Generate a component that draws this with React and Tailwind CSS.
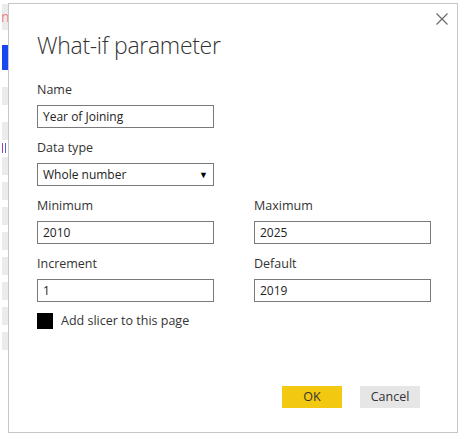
import React from "react";

const font = { fontFamily: '"Open Sans", "Noto Sans", sans-serif' };

function Field({ label, value }) {
  return (
    <div className="flex flex-col">
      <label className="h-[20px] leading-[20px] text-[12.5px] text-[#333]">{label}</label>
      <div className="mt-[5px] h-[23px] border border-[#7a7a7a] px-[5px] flex items-center text-[12px] text-[#222]">
        {value}
      </div>
    </div>
  );
}

export default function App() {
  return (
    <div className="w-[465px] h-[439px] bg-white flex overflow-hidden" style={font}>
      {/* background page strip */}
      <div className="w-[8px] pl-[2px] flex flex-col">
        <div className="mt-[4px] h-[26px] bg-[#ebebeb] flex items-center text-[#f08080] text-[14px] leading-none overflow-hidden">
          <span className="ml-[-1px]">n</span>
        </div>
        <div className="mt-[15px] h-[25px] bg-[#1a48f0]" />
        <div className="mt-[17px] h-[18px] bg-[#ebebeb]" />
        <div className="mt-[17px] h-[18px] bg-[#ebebeb]" />
        <div className="mt-[3px] h-[10px] flex gap-[2px]">
          <div className="w-[1px] bg-[#a03ca0]" />
          <div className="w-[1px] bg-[#4a6ad0]" />
        </div>
        <div className="mt-[4px] h-[18px] bg-[#ebebeb]" />
        {[0, 1, 2, 3, 4, 5, 6].map((i) => (
          <div key={i} className="mt-[7px] h-[18px] bg-[#ebebeb]" />
        ))}
      </div>

      {/* dialog */}
      <div className="mt-[3px] w-[450px] h-[430px] border border-[#c6c6c6] bg-white flex flex-col pl-[28px] pr-[26px] pt-[25px]">
        <div className="flex justify-between">
          <h1 className="text-[23px] leading-[32px] font-light text-[#333] tracking-[-0.3px]">
            What-if parameter
          </h1>
          <button className="mt-[-17px] mr-[-18px] w-[14px] h-[14px] flex items-center justify-center text-[#666]">
            <svg width="12" height="12" viewBox="0 0 12 12">
              <path d="M0.5 0.5 L11.5 11.5 M11.5 0.5 L0.5 11.5" stroke="#666" strokeWidth="1.1" fill="none" />
            </svg>
          </button>
        </div>

        <div className="mt-[19px] w-[177px] flex flex-col gap-[10px]">
          <Field label="Name" value="Year of Joining" />
          <div className="flex flex-col">
            <label className="h-[20px] leading-[20px] text-[12.5px] text-[#333]">Data type</label>
            <div className="mt-[5px] h-[23px] border border-[#7a7a7a] px-[5px] flex items-center justify-between text-[12px] text-[#222]">
              <span>Whole number</span>
              <span className="text-[9px] text-black">▼</span>
            </div>
          </div>
        </div>

        <div className="mt-[10px] grid grid-cols-[177px_177px] gap-x-[40px] gap-y-[10px]">
          <Field label="Minimum" value="2010" />
          <Field label="Maximum" value="2025" />
          <Field label="Increment" value="1" />
          <Field label="Default" value="2019" />
        </div>

        <div className="mt-[10px] flex items-center gap-[8px]">
          <div className="w-[16px] h-[16px] bg-black" />
          <span className="text-[12.5px] text-[#333]">Add slicer to this page</span>
        </div>

        <div className="mt-auto mb-[24px] flex justify-end gap-[18px] pr-[11px]">
          <button className="w-[60px] h-[22px] bg-[#f2c811] text-[12.5px] text-[#333]">OK</button>
          <button className="w-[60px] h-[22px] bg-[#e6e6e6] text-[12.5px] text-[#333]">Cancel</button>
        </div>
      </div>
    </div>
  );
}
